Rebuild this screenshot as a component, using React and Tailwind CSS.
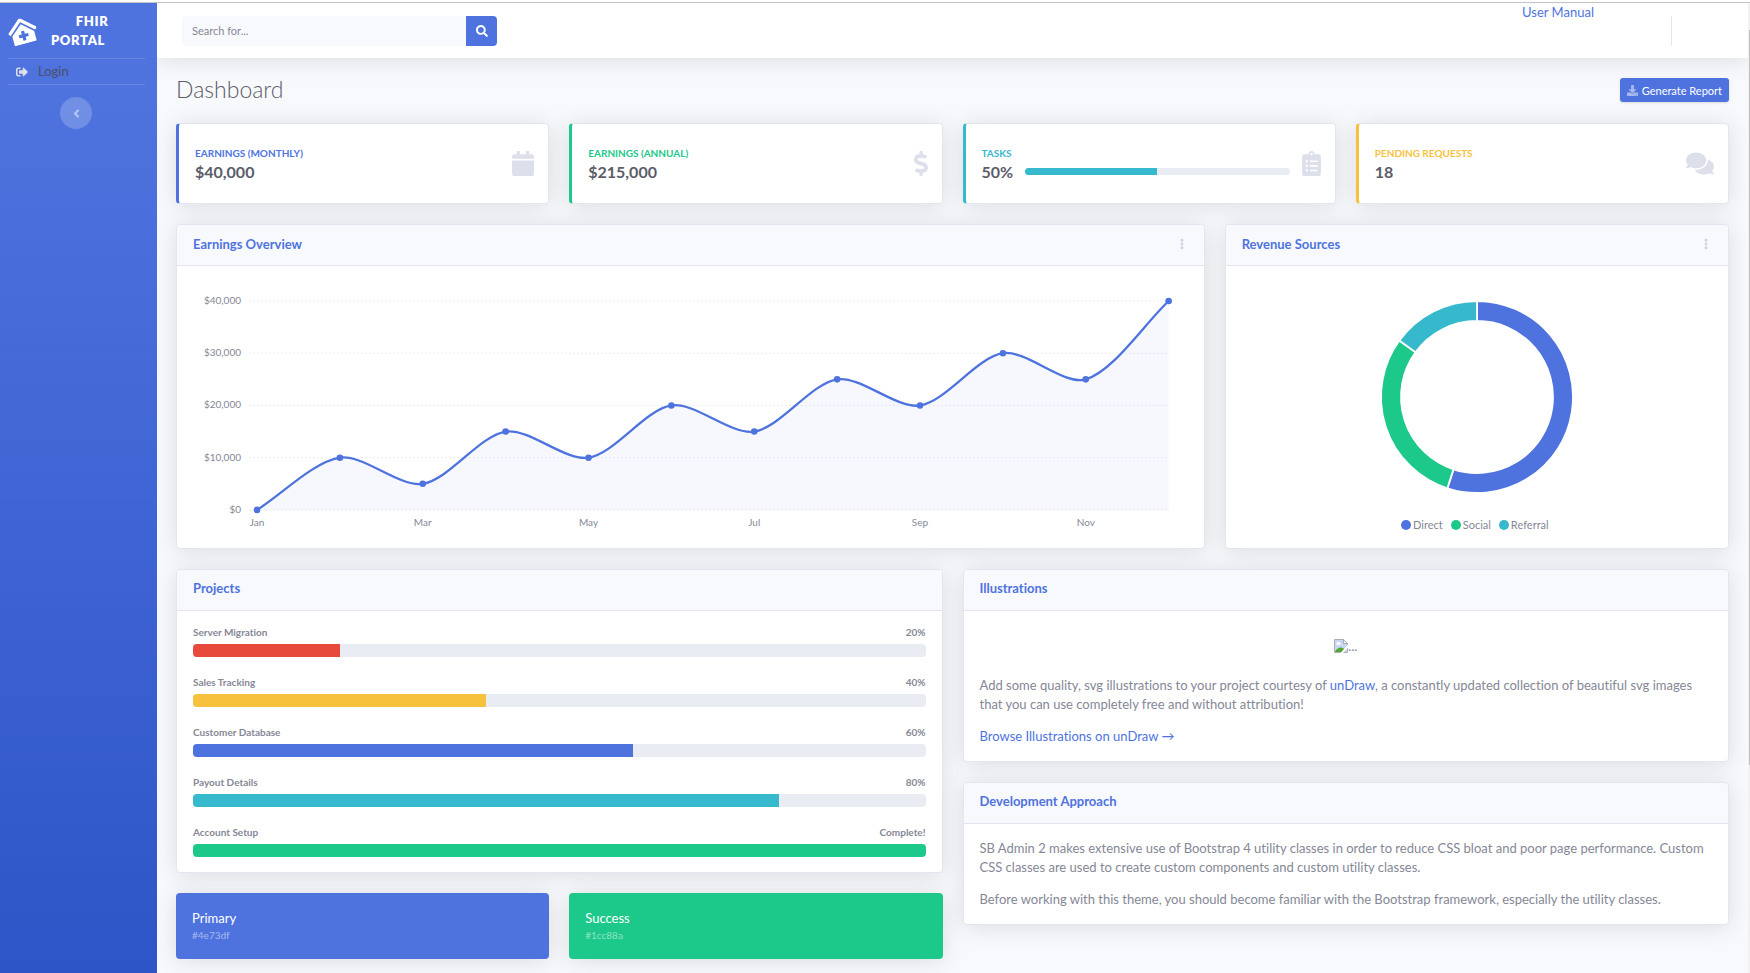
import {
  FaAngleLeft,
  FaCalendar,
  FaClinicMedical,
  FaClipboardList,
  FaComments,
  FaDollarSign,
  FaDownload,
  FaEllipsisV,
  FaSearch,
  FaSignOutAlt,
} from "react-icons/fa";

const stats = [
  {
    label: "Earnings (Monthly)",
    value: "$40,000",
    icon: FaCalendar,
    iconWidth: "w-[22px]",
    border: "border-l-[#4e73df]",
    text: "text-[#4e73df]",
  },
  {
    label: "Earnings (Annual)",
    value: "$215,000",
    icon: FaDollarSign,
    iconWidth: "w-[14px]",
    border: "border-l-[#1cc88a]",
    text: "text-[#1cc88a]",
  },
  {
    label: "Tasks",
    value: "50%",
    progress: 50,
    icon: FaClipboardList,
    iconWidth: "w-[19px]",
    border: "border-l-[#36b9cc]",
    text: "text-[#36b9cc]",
  },
  {
    label: "Pending Requests",
    value: "18",
    icon: FaComments,
    iconWidth: "w-[28px]",
    border: "border-l-[#f6c23e]",
    text: "text-[#f6c23e]",
  },
];

const projects = [
  { name: "Server Migration", percent: 20, color: "bg-[#e74a3b]" },
  { name: "Sales Tracking", percent: 40, color: "bg-[#f6c23e]" },
  { name: "Customer Database", percent: 60, color: "bg-[#4e73df]" },
  { name: "Payout Details", percent: 80, color: "bg-[#36b9cc]" },
  { name: "Account Setup", percent: 100, color: "bg-[#1cc88a]" },
];

const swatches = [
  { name: "Primary", hex: "#4e73df", bg: "bg-[#4e73df]" },
  { name: "Success", hex: "#1cc88a", bg: "bg-[#1cc88a]" },
];

const sources = [
  { name: "Direct", value: 55, color: "#4e73df" },
  { name: "Social", value: 30, color: "#1cc88a" },
  { name: "Referral", value: 15, color: "#36b9cc" },
];

const earnings = [0, 10000, 5000, 15000, 10000, 20000, 15000, 25000, 20000, 30000, 25000, 40000];
const months = ["Jan", "Feb", "Mar", "Apr", "May", "Jun", "Jul", "Aug", "Sep", "Oct", "Nov", "Dec"];
const ticks = [0, 10000, 20000, 30000, 40000];

// plot area of the line chart, in viewBox units
const plot = { left: 64, right: 976, top: 20, bottom: 229 };

const xAt = (i) => plot.left + (i * (plot.right - plot.left)) / (earnings.length - 1);
const yAt = (v) => plot.bottom - (v / 40000) * (plot.bottom - plot.top);

// smooth curve through all points, clamped to the plot area
function curvePath(points, tension = 0.3) {
  const clamp = (y) => Math.min(plot.bottom, Math.max(plot.top, y));
  const controls = points.map((p, i) => {
    const prev = points[i - 1] || p;
    const next = points[i + 1] || p;
    const d1 = Math.hypot(p.x - prev.x, p.y - prev.y);
    const d2 = Math.hypot(next.x - p.x, next.y - p.y);
    const a = (tension * d1) / (d1 + d2);
    const b = (tension * d2) / (d1 + d2);
    return {
      before: { x: p.x - a * (next.x - prev.x), y: clamp(p.y - a * (next.y - prev.y)) },
      after: { x: p.x + b * (next.x - prev.x), y: clamp(p.y + b * (next.y - prev.y)) },
    };
  });
  return points
    .map((p, i) => {
      if (i === 0) return `M${p.x},${p.y}`;
      const c1 = controls[i - 1].after;
      const c2 = controls[i].before;
      return `C${c1.x},${c1.y} ${c2.x},${c2.y} ${p.x},${p.y}`;
    })
    .join(" ");
}

function EarningsChart() {
  const points = earnings.map((v, i) => ({ x: xAt(i), y: yAt(v) }));
  const line = curvePath(points);

  return (
    <svg viewBox="0 0 995 252" className="block w-full" role="img" aria-label="Earnings Overview">
      {ticks.map((t) => (
        <g key={t}>
          <line
            x1={plot.left - 8}
            x2={plot.right}
            y1={yAt(t)}
            y2={yAt(t)}
            stroke="#eaecf4"
            strokeDasharray="2 2"
          />
          <text x={48} y={yAt(t) + 3} textAnchor="end" fontSize="10" fill="#858796">
            ${t.toLocaleString("en-US")}
          </text>
        </g>
      ))}
      {months.map((m, i) =>
        i % 2 === 0 ? (
          <text key={m} x={xAt(i)} y={245} textAnchor="middle" fontSize="10" fill="#858796">
            {m}
          </text>
        ) : null
      )}
      <path
        d={`${line} L${plot.right},${plot.bottom} L${plot.left},${plot.bottom} Z`}
        fill="#4e73df"
        fillOpacity="0.05"
      />
      <path d={line} fill="none" stroke="#4e73df" strokeWidth="2.3" />
      {points.map((p) => (
        <circle key={p.x} cx={p.x} cy={p.y} r="3.3" fill="#4e73df" />
      ))}
    </svg>
  );
}

function RevenueChart() {
  const outer = 96;
  const inner = 76;
  const at = (r, share) => {
    const a = share * 2 * Math.PI - Math.PI / 2;
    return `${r * Math.cos(a)},${r * Math.sin(a)}`;
  };
  let start = 0;

  return (
    <svg viewBox="-116 -116 232 232" className="mx-auto block h-[232px]" role="img" aria-label="Revenue Sources">
      {sources.map((s) => {
        const from = start;
        const to = start + s.value / 100;
        const large = s.value > 50 ? 1 : 0;
        start = to;
        return (
          <path
            key={s.name}
            d={`M${at(outer, from)} A${outer},${outer} 0 ${large} 1 ${at(outer, to)} L${at(inner, to)} A${inner},${inner} 0 ${large} 0 ${at(inner, from)} Z`}
            fill={s.color}
            stroke="#fff"
            strokeWidth="1.8"
          />
        );
      })}
    </svg>
  );
}

function Card({ title, menu, className = "", children }) {
  return (
    <section
      className={`rounded border border-[#e3e6f0] bg-white shadow-[0_2px_22px_rgba(58,59,69,0.15)] ${className}`}
    >
      <div className="flex h-[41px] items-center justify-between rounded-t border-b border-[#e3e6f0] bg-[#f8f9fc] px-4 pb-0.5">
        <h2 className="text-[13px] font-bold text-[#4e73df]">{title}</h2>
        {menu && (
          <button aria-label={`${title} menu`} className="px-1 text-xs text-[#d1d3e2]">
            <FaEllipsisV className="w-1" />
          </button>
        )}
      </div>
      <div className="p-[15px] px-4">{children}</div>
    </section>
  );
}

function StatCard({ stat }) {
  const Icon = stat.icon;
  return (
    <div
      className={`flex h-[81px] items-center rounded border border-l-3 border-[#e3e6f0] bg-white pr-[14px] pl-4 shadow-[0_2px_22px_rgba(58,59,69,0.15)] ${stat.border}`}
    >
      <div className="flex-1 pt-0.5">
        <div className={`text-[10px] leading-[14px] font-bold uppercase ${stat.text}`}>{stat.label}</div>
        <div className="flex items-center gap-3">
          <div className="text-base leading-6 font-bold text-[#5a5c69]">{stat.value}</div>
          {stat.progress && (
            <div className="mr-3 h-[7px] flex-1 overflow-hidden rounded bg-[#eaecf4]">
              <div className="h-full bg-[#36b9cc]" style={{ width: `${stat.progress}%` }} />
            </div>
          )}
        </div>
      </div>
      <Icon className={`text-[25px] text-[#dddfeb] ${stat.iconWidth}`} />
    </div>
  );
}

function BrokenImage() {
  return (
    <svg width="14" height="14" viewBox="0 0 14 14" aria-hidden="true">
      <path d="M0.5 0.5h9l4 4v9h-13z" fill="#c6d7f5" stroke="#a9adb5" />
      <path d="M9.5 0.5v4h4z" fill="#fff" stroke="#a9adb5" />
      <ellipse cx="4.5" cy="4.5" rx="2.2" ry="1.5" fill="#fff" />
      <path d="M1 13c1-3 3.500-4.500 6-4.500 2 0 3 1 3.500 2L8.500 13z" fill="#55a630" />
      <path d="M14 5.500L6.500 14H9l5-5.500z" fill="#fff" />
    </svg>
  );
}

function Sidebar() {
  return (
    <aside className="w-[157px] shrink-0 bg-linear-to-b from-[#4e73df] from-10% to-[#2e55c7]">
      <a href="#" className="flex h-[55px] items-center pl-2 text-white">
        <FaClinicMedical className="w-[29px] -rotate-15 text-[26px]" />
        <span className="w-[82px] text-center text-[13px] leading-[19px] font-extrabold tracking-wider">
          <span className="block pl-7">FHIR</span>
          <span className="block">PORTAL</span>
        </span>
      </a>
      <nav className="mr-3 ml-2 border-y border-white/15">
        <a href="#" className="flex h-[25px] items-center gap-[10px] pl-2 text-[13px] text-[#4b4f69]">
          <FaSignOutAlt className="text-xs text-[#dddfeb]" />
          Login
        </a>
      </nav>
      <button
        aria-label="Collapse sidebar"
        className="mt-3 ml-[60px] flex size-8 items-center justify-center rounded-full bg-white/20 text-[13px] text-white/50"
      >
        <FaAngleLeft />
      </button>
    </aside>
  );
}

function Topbar() {
  return (
    <header className="relative flex h-[55px] items-start justify-between bg-white pt-[13px] pl-[25px] shadow-[0_2px_22px_rgba(58,59,69,0.15)]">
      <form className="flex h-[30px] w-[315px]">
        <input
          type="text"
          aria-label="Search"
          placeholder="Search for..."
          className="min-w-0 flex-1 rounded-l bg-[#f8f9fc] px-[10px] pb-0.5 text-[11px] text-[#6e707e] outline-none placeholder:text-[#858796]"
        />
        <button
          type="button"
          aria-label="Submit search"
          className="flex w-[31px] items-center justify-center rounded-r bg-[#4e73df] text-xs text-white"
        >
          <FaSearch />
        </button>
      </form>
      <div className="flex">
        <a href="#" className="-mt-[13px] text-[13px] leading-[19px] text-[#4e73df]">
          User Manual
        </a>
        <div className="mr-[76px] ml-[77px] h-[30px] border-r border-[#e3e6f0]" />
      </div>
    </header>
  );
}

export default function App() {
  return (
    <div className="flex min-h-screen flex-col bg-white font-[Lato,sans-serif] text-[13px] leading-[19px] text-[#858796] [font-variant-ligatures:none]">
      <div className="h-[3px] border-b border-[#c4c4c4]" />
      <div className="flex flex-1">
        <Sidebar />
        <div className="min-w-0 flex-1 overflow-hidden bg-[#f8f9fc]">
          <Topbar />
          <main className="flex flex-col gap-5 px-[19px] pt-5 pb-[14px]">
            <div className="flex h-[25px] items-start justify-between">
              <h1 className="text-[23px] leading-[22px] font-light text-[#5a5c69]">Dashboard</h1>
              <button className="flex h-6 items-center gap-1 rounded-[3px] bg-[#4e73df] px-[7px] text-[11px] text-white shadow-sm">
                <FaDownload className="text-[11px] text-white/50" />
                Generate Report
              </button>
            </div>

            <div className="grid grid-cols-4 gap-5">
              {stats.map((s) => (
                <StatCard key={s.label} stat={s} />
              ))}
            </div>

            <div className="grid grid-cols-3 gap-5">
              <Card title="Earnings Overview" menu className="col-span-2">
                <EarningsChart />
              </Card>
              <Card title="Revenue Sources" menu>
                <RevenueChart />
                <ul className="mt-1 flex justify-center gap-2 pr-1 text-[11px] leading-[15px]">
                  {sources.map((s) => (
                    <li key={s.name} className="flex items-center gap-0.5">
                      <span className="size-[10px] rounded-full" style={{ backgroundColor: s.color }} />
                      {s.name}
                    </li>
                  ))}
                </ul>
              </Card>
            </div>

            <div className="grid grid-cols-2 items-start gap-5">
              <div className="flex flex-col gap-5">
                <Card title="Projects">
                  <div className="flex flex-col gap-[19px]">
                    {projects.map((p) => (
                      <div key={p.name}>
                        <h3 className="mb-1.5 flex justify-between text-[10px] leading-3 font-bold">
                          {p.name}
                          <span>{p.percent === 100 ? "Complete!" : `${p.percent}%`}</span>
                        </h3>
                        <div className="h-[13px] overflow-hidden rounded bg-[#eaecf4]">
                          <div className={`h-full ${p.color}`} style={{ width: `${p.percent}%` }} />
                        </div>
                      </div>
                    ))}
                  </div>
                </Card>
                <div className="grid grid-cols-2 gap-5">
                  {swatches.map((s) => (
                    <div
                      key={s.name}
                      className={`rounded p-4 text-white shadow-[0_2px_22px_rgba(58,59,69,0.15)] ${s.bg}`}
                    >
                      {s.name}
                      <div className="text-[10px] leading-[15px] text-white/50">{s.hex}</div>
                    </div>
                  ))}
                </div>
              </div>

              <div className="flex flex-col gap-5">
                <Card title="Illustrations">
                  <div className="flex items-center justify-center pt-[11px] pb-5">
                    <BrokenImage />
                    <span>...</span>
                  </div>
                  <p>
                    Add some quality, svg illustrations to your project courtesy of{" "}
                    <a href="#" className="text-[#4e73df]">
                      unDraw
                    </a>
                    , a constantly updated collection of beautiful svg images that you can use
                    completely free and without attribution!
                  </p>
                  <a href="#" className="mt-[13px] block text-[#4e73df]">
                    Browse Illustrations on unDraw →
                  </a>
                </Card>
                <Card title="Development Approach">
                  <p>
                    SB Admin 2 makes extensive use of Bootstrap 4 utility classes in order to reduce
                    CSS bloat and poor page performance. Custom CSS classes are used to create custom
                    components and custom utility classes.
                  </p>
                  <p className="mt-[13px]">
                    Before working with this theme, you should become familiar with the Bootstrap
                    framework, especially the utility classes.
                  </p>
                </Card>
              </div>
            </div>
          </main>
        </div>
        <div className="w-0.5 bg-[#f1f1f1] pt-[27px]">
          <div className="ml-px h-[735px] bg-[#c1c1c1]" />
        </div>
      </div>
    </div>
  );
}
